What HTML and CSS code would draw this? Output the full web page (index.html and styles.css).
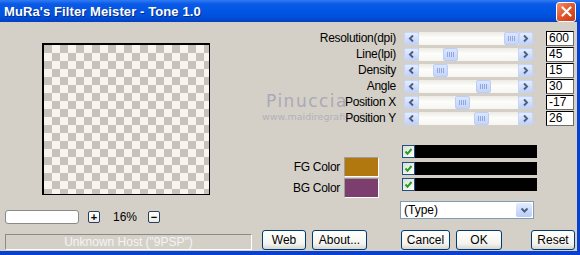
FILE: index.html
```html
<!DOCTYPE html>
<html lang="en">
<head>
    <meta charset="UTF-8">
    <title>MuRa's Filter Meister - Tone 1.0</title>
    <link rel="stylesheet" href="styles.css">
</head>
<body>
    <div class="window">
        <div class="titlebar">
            <span class="title">MuRa's Filter Meister - Tone 1.0</span>
            <button class="close-btn" aria-label="Close">
                <svg width="11" height="11" viewBox="0 0 11 11"><path d="M1.5 1.5 L9.5 9.5 M9.5 1.5 L1.5 9.5" stroke="#fff" stroke-width="2.2" stroke-linecap="round"/></svg>
            </button>
        </div>

        <div class="client">
            <div class="watermark">
                <div class="wm-name">Pinuccia</div>
                <div class="wm-site">www.maidiregrafica.it</div>
            </div>

            <!-- Left side: preview, zoom, host -->
            <div class="left-col">
                <div class="preview"></div>
                <div class="zoom-row">
                    <div class="zoom-field"></div>
                    <button class="mini-btn">+</button>
                    <span class="zoom-value">16%</span>
                    <button class="mini-btn">&minus;</button>
                </div>
                <div class="status">Unknown Host ("9PSP")</div>
            </div>

            <!-- Right side: controls -->
            <div class="right-col">
                <div class="sliders" id="sliders"></div>

                <div class="colors">
                    <div class="swatches">
                        <div class="swatch-row">
                            <span class="swatch-label">FG Color</span>
                            <span class="swatch fg"></span>
                        </div>
                        <div class="swatch-row">
                            <span class="swatch-label">BG Color</span>
                            <span class="swatch bg"></span>
                        </div>
                    </div>
                    <div class="checks" id="checks"></div>
                </div>

                <div class="type-select">
                    <span class="type-text">(Type)</span>
                    <span class="drop-btn">
                        <svg width="9" height="7" viewBox="0 0 9 7"><polyline points="1.5,1.5 4.5,4.5 7.5,1.5" fill="none" stroke="#4d6185" stroke-width="2"/></svg>
                    </span>
                </div>

                <div class="buttons">
                    <button class="xp-btn btn-web">Web</button>
                    <button class="xp-btn btn-about">About...</button>
                    <button class="xp-btn btn-cancel">Cancel</button>
                    <button class="xp-btn btn-ok">OK</button>
                    <button class="xp-btn btn-reset">Reset</button>
                </div>
            </div>
        </div>
    </div>

    <script>
        const sliders = [
            { label: "Resolution(dpi)", value: "600", pos: 85 },
            { label: "Line(lpi)", value: "45", pos: 24 },
            { label: "Density", value: "15", pos: 14 },
            { label: "Angle", value: "30", pos: 57 },
            { label: "Position X", value: "-17", pos: 36 },
            { label: "Position Y", value: "26", pos: 55 }
        ];

        const leftArrow = '<svg width="7" height="9" viewBox="0 0 7 9"><polyline points="5,1.5 2,4.5 5,7.5" fill="none" stroke="#4d6185" stroke-width="2"/></svg>';
        const rightArrow = '<svg width="7" height="9" viewBox="0 0 7 9"><polyline points="2,1.5 5,4.5 2,7.5" fill="none" stroke="#4d6185" stroke-width="2"/></svg>';

        const sliderBox = document.getElementById("sliders");
        sliders.forEach(function (s) {
            let row = document.createElement("div");
            row.className = "slider-row";
            row.innerHTML =
                `<span class="slider-label">${s.label}</span>
                 <div class="sb">
                    <span class="sb-btn">${leftArrow}</span>
                    <div class="sb-track"><span class="sb-thumb" style="margin-left:${s.pos}px"><i></i><i></i><i></i><i></i></span></div>
                    <span class="sb-btn">${rightArrow}</span>
                 </div>
                 <span class="val-box">${s.value}</span>`;
            sliderBox.appendChild(row);
        });

        const checkBox = document.getElementById("checks");
        for (let i = 0; i < 3; i++) {
            let row = document.createElement("div");
            row.className = "check-row";
            row.innerHTML = '<span class="checkbox"><svg width="9" height="9" viewBox="0 0 9 9"><polyline points="1.5,4.5 3.5,6.8 7.5,2" fill="none" stroke="#21a121" stroke-width="2"/></svg></span><span class="black-bar"></span>';
            checkBox.appendChild(row);
        }
    </script>
</body>
</html>
```

FILE: styles.css
```css
/* General */
* {
    box-sizing: border-box;
}

body {
    margin: 0;
    background: #d4d0c8;
    font-family: 'Liberation Sans', Arial, sans-serif;
    font-size: 12px;
    color: #000;
}

button {
    font-family: inherit;
    padding: 0;
    cursor: pointer;
}

/* Window frame */
.window {
    width: 580px;
    height: 255px;
    background: #d4d0c8;
    border-right: 3px solid #0841d0;
    border-bottom: 4px solid #0841d0;
    display: flex;
    flex-direction: column;
}

/* Title bar */
.titlebar {
    height: 22px;
    margin-right: -3px;
    background: linear-gradient(#2f7cf3 0, #0a5ae6 4px, #0056e4 11px, #0050db 17px, #0440c0 22px);
    display: flex;
    align-items: center;
    justify-content: space-between;
    padding: 0 4px 0 4px;
}

.title {
    color: #fff;
    font-weight: bold;
    font-size: 13px;
    letter-spacing: 0.1px;
    text-shadow: 1px 1px 0 #0a2a8a;
}

.close-btn {
    width: 20px;
    height: 20px;
    margin-top: 1px;
    border: 1px solid #fff;
    border-radius: 3px;
    background: linear-gradient(135deg, #f0926f, #e2552b 50%, #c83a12);
    display: flex;
    align-items: center;
    justify-content: center;
}

/* Client area */
.client {
    position: relative;
    flex: 1;
    display: flex;
}

.watermark {
    position: absolute;
    left: 266px;
    top: 69px;
    color: #a9a9b6;
    z-index: 0;
}

.wm-name {
    font-family: 'DejaVu Sans', sans-serif;
    font-size: 17px;
    letter-spacing: 1.5px;
    line-height: 20px;
}

.wm-site {
    font-family: 'DejaVu Sans', sans-serif;
    font-size: 9.5px;
    color: #b0b0bb;
    line-height: 12px;
    margin-left: -4px;
}

/* Left column */
.left-col {
    width: 255px;
}

.preview {
    width: 168px;
    height: 152px;
    margin: 21px 0 0 42px;
    border-top: 2px solid #000;
    border-left: 2px solid #000;
    border-right: 1px solid #000;
    border-bottom: 1px solid #000;
    background: conic-gradient(#f7f5ee 25%, #c7c3ba 0 50%, #f7f5ee 0 75%, #c7c3ba 0);
    background-size: 16px 16px;
}

.zoom-row {
    display: flex;
    align-items: center;
    height: 14px;
    margin: 15px 0 0 5px;
}

.zoom-field {
    width: 74px;
    height: 14px;
    background: #fff;
    border: 1px solid #8a8a8a;
    border-radius: 3px;
}

.mini-btn {
    width: 12px;
    height: 12px;
    border: 1px solid #2b3e5e;
    border-radius: 2px;
    background: linear-gradient(#fff, #ecebe6);
    font-size: 11px;
    line-height: 9px;
    font-weight: bold;
    color: #000;
}

.zoom-row .mini-btn:first-of-type {
    margin-left: 9px;
}

.zoom-value {
    width: 48px;
    padding-left: 13px;
    font-size: 12px;
}

.status {
    width: 247px;
    height: 16px;
    margin: 10px 0 0 5px;
    border-top: 1px solid #8c8a85;
    border-left: 1px solid #8c8a85;
    border-right: 1px solid #fff;
    border-bottom: 1px solid #fff;
    color: #f4f4f2;
    text-align: center;
    line-height: 14px;
    font-size: 12px;
}

/* Right column */
.right-col {
    flex: 1;
}

.sliders {
    position: relative;
    z-index: 1;
    margin-top: 8px;
}

.slider-row {
    display: flex;
    align-items: center;
    height: 16px;
}

.slider-label {
    width: 141px;
    text-align: right;
    letter-spacing: -0.3px;
}

.sb {
    display: flex;
    width: 129px;
    height: 13px;
    margin-left: 8px;
}

.sb-btn {
    width: 15px;
    height: 13px;
    border: 1px solid #c6d5fb;
    border-radius: 2px;
    background: linear-gradient(#e6edfd, #c0d2f8);
    display: flex;
    align-items: center;
    justify-content: center;
}

.sb-track {
    flex: 1;
    display: flex;
    background: linear-gradient(#ecebe4, #fdfdfb 45%, #f6f5f0);
}

.sb-thumb {
    width: 15px;
    height: 13px;
    border: 1px solid #bccdf6;
    border-radius: 2px;
    background: linear-gradient(#dbe5fd, #c4d5fa);
    display: flex;
    align-items: center;
    justify-content: center;
    gap: 1px;
}

.sb-thumb i {
    display: block;
    width: 1px;
    height: 5px;
    background: #8fa9e0;
}

.val-box {
    width: 28px;
    height: 15px;
    margin-left: 13px;
    background: #fff;
    border-top: 1px solid #000;
    border-left: 1px solid #000;
    border-right: 1px solid #6e6e6e;
    border-bottom: 1px solid #6e6e6e;
    padding-left: 2px;
    line-height: 13px;
}

/* Colors and checkboxes */
.colors {
    display: flex;
    height: 52px;
    margin-top: 19px;
}

.swatches {
    width: 124px;
    padding-top: 11px;
}

.swatch-row {
    display: flex;
    align-items: center;
    height: 21px;
}

.swatch-label {
    width: 85px;
    text-align: right;
    letter-spacing: -0.3px;
}

.swatch {
    width: 35px;
    height: 20px;
    margin-left: 4px;
    border-top: 1px solid #a09d96;
    border-left: 1px solid #a09d96;
    border-right: 1px solid #fff;
    border-bottom: 1px solid #fff;
}

.swatch.fg {
    background: #b17810;
}

.swatch.bg {
    background: #7c3e6e;
}

.checks {
    margin-left: 23px;
    display: flex;
    flex-direction: column;
    gap: 3.5px;
}

.check-row {
    display: flex;
    height: 13px;
}

.checkbox {
    width: 13px;
    height: 13px;
    border: 1px solid #1c5180;
    background: linear-gradient(135deg, #dcdcd5, #fff);
    display: flex;
    align-items: center;
    justify-content: center;
}

.black-bar {
    width: 122px;
    background: #000;
}

/* Type dropdown */
.type-select {
    display: flex;
    width: 134px;
    height: 18px;
    margin: 4px 0 0 145px;
    background: #fff;
    border: 1px solid #7f9db9;
}

.type-text {
    flex: 1;
    padding-left: 3px;
    line-height: 16px;
}

.drop-btn {
    width: 16px;
    margin: 1px;
    border-radius: 2px;
    background: linear-gradient(#e3ebfd, #b9cdf8);
    display: flex;
    align-items: center;
    justify-content: center;
}

/* Bottom buttons */
.buttons {
    display: flex;
    margin: 11px 0 0 7px;
}

.xp-btn {
    height: 20px;
    border: 1px solid #003c74;
    border-radius: 3px;
    background: linear-gradient(#fff, #f4f3ee 70%, #d8d6cc);
    font-size: 12px;
    color: #000;
}

.btn-web { width: 44px; }
.btn-about { width: 55px; margin-left: 6px; }
.btn-cancel { width: 49px; margin-left: 34px; }
.btn-ok { width: 46px; margin-left: 6px; }
.btn-reset { width: 44px; margin-left: 29px; }
```
